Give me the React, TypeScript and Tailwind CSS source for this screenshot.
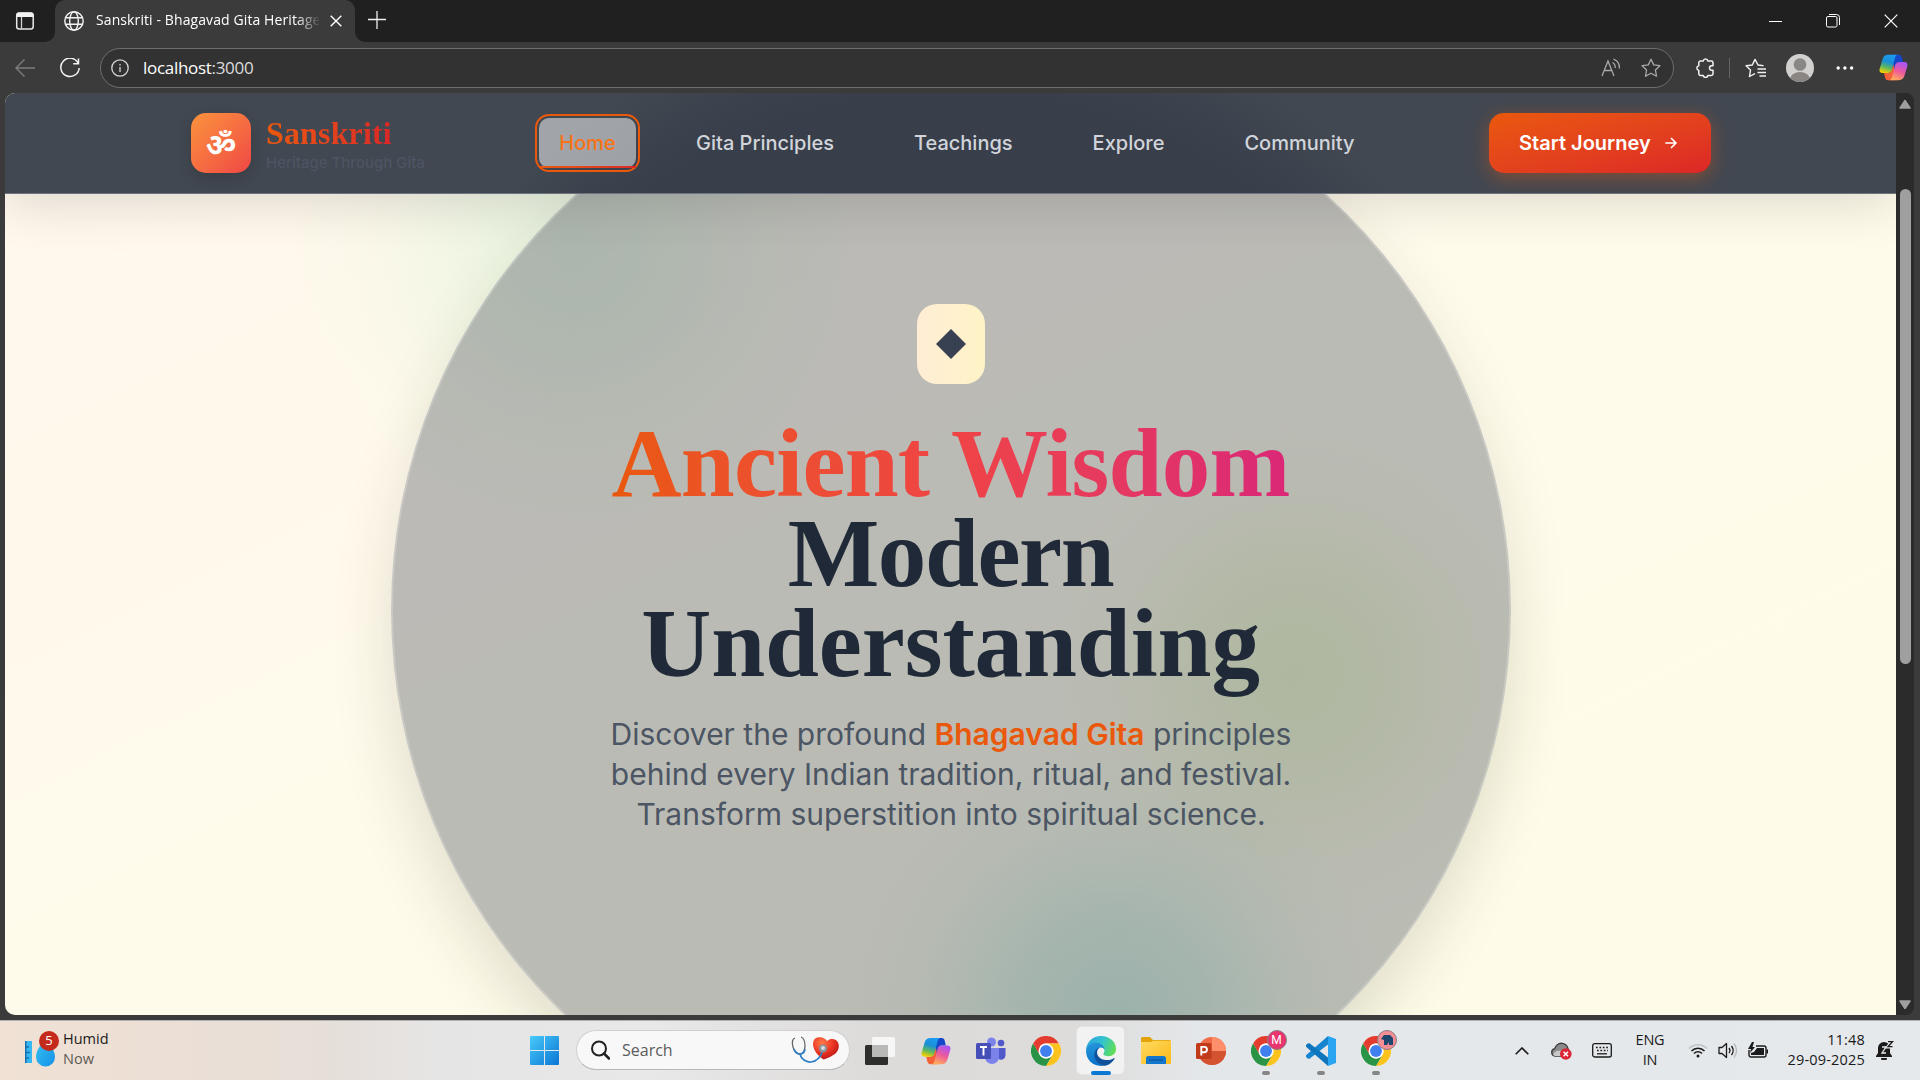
import React from "react";
import type { ReactNode } from "react";

const SEGOE = "font-['Open_Sans','Noto_Sans',sans-serif]";

function CopilotIcon({ size, id }: { size: number; id: string }) {
  return (
    <svg width={size} height={size} viewBox="0 0 32 32">
      <defs>
        <linearGradient id={id + "a"} x1="0.6" y1="0" x2="0.3" y2="1">
          <stop offset="0" stopColor="#1c9bf0" />
          <stop offset="0.4" stopColor="#1b8fd6" />
          <stop offset="0.7" stopColor="#5cb860" />
          <stop offset="1" stopColor="#f5d000" />
        </linearGradient>
        <linearGradient id={id + "b"} x1="0.7" y1="0" x2="0.3" y2="1">
          <stop offset="0" stopColor="#a855f7" />
          <stop offset="0.5" stopColor="#ee5a9b" />
          <stop offset="1" stopColor="#ffae5a" />
        </linearGradient>
      </defs>
      <path d="M14 2h8c2 0 2.800 1 3.300 3l1.200 5h-4c-2.500 0-3.500 1-4.200 3.500L16 20z" fill="#1548c8" />
      <path d="M18 30h-8c-2 0-2.800-1-3.300-3l-1.200-5h4c2.500 0 3.500-1 4.200-3.500L16 12z" fill="#f4623a" />
      <path d="M10 2h11c-2 0-2.900 1.500-3.500 4l-3.200 12c-.7 2.700-2 4-4.800 4H4.500C1 22 0 20 .8 17L4 6.500C5 3.500 7 2 10 2z" fill={`url(#${id}a)`} />
      <path d="M22 30H11c2 0 2.900-1.500 3.500-4l3.200-12c.7-2.700 2-4 4.800-4h5c3.500 0 4.500 2 3.700 5L28 25.500C27 28.500 25 30 22 30z" fill={`url(#${id}b)`} />
    </svg>
  );
}

function ChromeIcon() {
  return (
    <svg width="30" height="30" viewBox="0 0 48 48">
      <circle cx="24" cy="24" r="24" fill="#fff" />
      <path d="M3.200 12A24 24 0 0 1 44.800 12H24a12 12 0 0 0-10.400 6z" fill="#e33b2e" />
      <path d="M44.800 12A24 24 0 0 1 24 48l10.400-18A12 12 0 0 0 34.400 18L24 12z" fill="#fcc31e" />
      <path d="M3.200 12A24 24 0 0 0 24 48l10.400-18a12 12 0 0 1-20.800 0z" fill="#2a9446" />
      <path d="M3.200 12L13.600 30 16 18z" fill="#e33b2e" />
      <path d="M3.200 12L13.600 30l5 4L10 38z" fill="#2a9446" />
      <circle cx="24" cy="24" r="12" fill="#fff" />
      <circle cx="24" cy="24" r="9.500" fill="#3f7fee" />
    </svg>
  );
}

function EdgeIcon() {
  return (
    <svg width="30" height="30" viewBox="0 0 32 32">
      <defs>
        <linearGradient id="edTop" x1="0" y1="0.3" x2="1" y2="0.6">
          <stop offset="0" stopColor="#2aa4dc" />
          <stop offset="0.5" stopColor="#34c3cf" />
          <stop offset="1" stopColor="#62e04e" />
        </linearGradient>
        <linearGradient id="edLeft" x1="0" y1="0" x2="0.3" y2="1">
          <stop offset="0" stopColor="#2a9ade" />
          <stop offset="1" stopColor="#0a72c8" />
        </linearGradient>
      </defs>
      <path d="M0 15C.5 6.500 7.500 0 16 0c9 0 16 6 16 13.500 0 5-3.500 8-8 8-3.500 0-5.500-1.200-5.500-2.300 0-.8 1.200-1.200 1.200-3.700 0-3.500-4-6.500-9-6.500-4 0-8 2-10.700 6z" fill="url(#edTop)" />
      <path d="M0 16c.5-5 5-9 10.500-9 5 0 9 3.500 9.200 7.500-1-1.500-3-2.500-5-2-3.500 1-5.500 5-4.500 9.500.8 4.500 4 8 8.500 9.700-10 1.500-18.700-5.700-18.700-15.700z" fill="url(#edLeft)" />
      <path d="M14.500 12.500c-2.800 2-3.500 5-2 8 1.800 3.700 6.500 5.500 11 5.200 2.500-.2 4.500-1 6-2 .8-.4 1.200.2.800.8C27.500 29 23 32 18.500 31.800 13 30 9 25.500 9 20c0-4 2-6.800 5.500-7.500z" fill="#10519c" />
    </svg>
  );
}

function Caption({ children }: { children: ReactNode }) {
  return <div className="flex h-[42px] w-[58px] items-center justify-center">{children}</div>;
}

function TitleBar() {
  return (
    <div className="flex h-[42px] bg-[#202020]">
      <div className="flex w-[55px] items-center justify-center bg-[#3b3b3b]">
        <div className="flex h-full w-full items-center rounded-br-[10px] bg-[#202020] pl-[15px]">
          <svg width="20" height="20" viewBox="0 0 20 20" fill="none">
            <rect x="1.700" y="2" width="16.500" height="16" rx="2.500" stroke="#e8e8e8" strokeWidth="1.500" />
            <path d="M1.500 6V4a2.500 2.500 0 0 1 2.500-2.500h12A2.500 2.500 0 0 1 18.500 4v2z" fill="#f2f2f2" />
            <path d="M6.500 6v12" stroke="#d0d0d0" strokeWidth="1.300" />
          </svg>
        </div>
      </div>
      <div className="flex w-[300px] items-center rounded-t-[10px] bg-[#3b3b3b] pl-[9px]">
        <svg width="20" height="20" viewBox="0 0 20 20" fill="none" stroke="#f4f4f4" strokeWidth="1.400">
          <circle cx="10" cy="10" r="9.200" />
          <ellipse cx="10" cy="10" rx="4.300" ry="9.200" />
          <path d="M1.600 6.700h16.800M1.600 13.300h16.800" />
        </svg>
        <div className={`${SEGOE} mb-[3px] ml-3 w-[223px] overflow-hidden whitespace-nowrap text-[14px] tracking-[0.1px] text-white [mask-image:linear-gradient(90deg,#000_200px,transparent_225px)]`}>
          Sanskriti - Bhagavad Gita Heritage
        </div>
        <svg className="ml-[11px]" width="12" height="12" viewBox="0 0 12 12" stroke="#fff" strokeWidth="1.400">
          <path d="M.7.700l10.600 10.600M11.300.700L.7 11.300" />
        </svg>
      </div>
      <div className="w-[10px] bg-[#3b3b3b]">
        <div className="h-full rounded-bl-[10px] bg-[#202020]" />
      </div>
      <svg className="mt-[11px] ml-[3px]" width="18" height="18" viewBox="0 0 18 18" stroke="#f0f0f0" strokeWidth="1.300">
        <path d="M9 0v18M0 8.500h18" />
      </svg>
      <div className="ml-auto flex">
        <Caption>
          <div className="h-px w-[13px] bg-white" />
        </Caption>
        <Caption>
          <svg width="14" height="14" viewBox="0 0 14 14" fill="none" stroke="#fff">
            <rect x="0.500" y="2.500" width="10.500" height="10.500" rx="1.500" />
            <path d="M3 .5h7.500a3 3 0 0 1 3 3V11" />
          </svg>
        </Caption>
        <Caption>
          <svg width="14" height="14" viewBox="0 0 14 14" stroke="#fff" strokeWidth="1.200">
            <path d="M.7.700l12.600 12.600M13.300.700L.7 13.300" />
          </svg>
        </Caption>
      </div>
    </div>
  );
}

const STAR = "M10 1.200l2.700 5.700 6.200.8-4.500 4.300 1.100 6.200L10 15.200l-5.500 3 1.100-6.200L1.100 7.700l6.200-.8z";

function Toolbar() {
  return (
    <div className="flex h-[51px] items-center bg-[#3b3b3b]">
      <svg className="ml-[15px]" width="20" height="18" viewBox="0 0 20 18" fill="none" stroke="#7c7c7c" strokeWidth="1.400">
        <path d="M20 9H1M9.500.500L1 9l8.500 8.500" />
      </svg>
      <svg className="ml-[25px]" width="20" height="20" viewBox="0 0 20 20" fill="none" stroke="#f2f2f2" strokeWidth="1.500">
        <path d="M18.300 5.300A9.200 9.200 0 1 0 19.200 10M18.500.500v5.300h-5.300" />
      </svg>
      <div className="ml-5 flex h-10 w-[1574px] items-center rounded-full border border-[#6d6d6d] bg-[#323232] pl-[10px]">
        <svg width="18" height="18" viewBox="0 0 18 18" fill="none" stroke="#d6d6d6" strokeWidth="1.300">
          <circle cx="9" cy="9" r="8.200" />
          <path d="M9 8v5M9 5v1.500" />
        </svg>
        <span className={`${SEGOE} ml-[14px] text-[17px] tracking-[-0.3px] text-white`}>
          localhost<span className="text-[#dcdcdc]">:3000</span>
        </span>
        <svg className="mr-5 ml-auto" width="20" height="20" viewBox="0 0 20 20" fill="none" stroke="#a9a9a9" strokeWidth="1.300">
          <path d="M1 18L7 3l6 15M3.300 12.500h7.500M11.500 4.500c1.700.8 2.800 2.800 2.800 5.500M12.500 1.200c3.800 1.200 6 4.500 6 9.300" />
        </svg>
        <svg className="mr-3" width="20" height="20" viewBox="0 0 20 20" fill="none" stroke="#a9a9a9" strokeWidth="1.300" strokeLinejoin="round">
          <path d={STAR} />
        </svg>
      </div>
      <svg className="ml-[21px]" width="20" height="20" viewBox="0 0 20 20" fill="none" stroke="#f2f2f2" strokeWidth="1.500" strokeLinejoin="round">
        <path d="M5.500 3h2.700a2.400 2.400 0 0 1 4.700 0h3.400A1.700 1.700 0 0 1 18 4.700v3h-1.200a2.300 2.300 0 0 0 0 4.600H18v3.500a1.700 1.700 0 0 1-1.700 1.700h-3.400a2.400 2.400 0 0 1-4.700 0H5.500a1.700 1.700 0 0 1-1.700-1.700v-3.400a2.400 2.400 0 0 1 0-4.700V4.700A1.700 1.700 0 0 1 5.500 3z" />
      </svg>
      <div className="ml-[14px] h-5 w-px bg-[#646464]" />
      <svg className="ml-[15px]" width="21" height="20" viewBox="0 0 21 20" fill="none" stroke="#f2f2f2" strokeWidth="1.400" strokeLinejoin="round">
        <path d="M18.500 7.200l-5.500-.7L10 .9 7.300 6.500l-6.200.8L5.500 11.600 4.500 18l5.500-2.800M12.500 10.500H21M12.500 14H21M14.500 17.500H21" transform="translate(0 .5)" />
      </svg>
      <svg className="ml-5" width="28" height="28" viewBox="0 0 28 28">
        <clipPath id="avatarClip">
          <circle cx="14" cy="14" r="14" />
        </clipPath>
        <g clipPath="url(#avatarClip)">
          <rect width="28" height="28" fill="#d2d0ce" />
          <circle cx="14" cy="10.500" r="6.300" fill="#8a8683" />
          <ellipse cx="14" cy="25.500" rx="10" ry="7.500" fill="#8a8683" />
        </g>
      </svg>
      <svg className="ml-[22px]" width="18" height="4" viewBox="0 0 18 4" fill="#fff">
        <circle cx="2.200" cy="2" r="1.700" />
        <circle cx="8.900" cy="2" r="1.700" />
        <circle cx="15.600" cy="2" r="1.700" />
      </svg>
      <div className="ml-[25px]">
        <CopilotIcon size={29} id="cpTop" />
      </div>
    </div>
  );
}

function NavLink({ children }: { children: ReactNode }) {
  return <a className="flex h-[50px] items-center px-5 text-[20px] font-medium whitespace-nowrap text-[#d1d5db]">{children}</a>;
}

function SiteNav() {
  return (
    <header className="relative z-10 flex h-[101px] shrink-0 items-start border-b border-[#6d7480] bg-[radial-gradient(circle_610px_at_946px_517px,#383e4a_0,#383e4a_84%,#424851_100%)] pt-5 pl-[186px] font-['Inter',sans-serif] shadow-[0_12px_50px_rgba(0,0,0,0.12)]">
      <div className="flex size-[60px] items-center justify-center rounded-[15px] bg-linear-to-br from-[#fb923c] to-[#ef4444] pt-[9px] font-['Noto_Sans_Devanagari','Noto_Sans',sans-serif] text-[30px] leading-none font-bold text-white shadow-[0_5px_16px_rgba(0,0,0,0.16)]">
        <span>ॐ</span>
      </div>
      <div className="ml-[15px] w-[270px]">
        <div className="w-fit bg-linear-to-r from-[#ea580c] to-[#dc2626] bg-clip-text font-['Liberation_Serif',serif] text-[32px] leading-[40px] font-bold tracking-[0.15px] text-transparent">
          Sanskriti
        </div>
        <div className="text-[15px] leading-5 font-medium whitespace-nowrap text-[#4b5563]">Heritage Through Gita</div>
      </div>
      <nav className="mt-[5px] flex gap-10">
        <div className="relative ml-[3px] flex h-[50px] w-[97px] items-center justify-center rounded-[10px] bg-white/50 outline-[2px] outline-offset-[2px] outline-[#ea580c]">
          <span className="text-[20px] font-medium text-[#f97316]">Home</span>
          <span className="absolute bottom-0 left-0 h-[2px] w-full bg-linear-to-r from-[#ea580c] to-[#dc2626]" />
        </div>
        <NavLink>Gita Principles</NavLink>
        <NavLink>Teachings</NavLink>
        <NavLink>Explore</NavLink>
        <NavLink>Community</NavLink>
      </nav>
      <button className="mr-[185px] ml-auto flex h-[60px] w-[222px] items-center rounded-[15px] bg-linear-to-br from-[#ea580c] to-[#dc2626] pl-[30px] text-[20px] font-semibold whitespace-nowrap text-white shadow-[0_5px_19px_rgba(234,88,12,0.4)]">
        Start Journey
        <svg className="ml-[14px]" width="12" height="12" viewBox="0 0 12 12" fill="none" stroke="#fff" strokeWidth="1.700" strokeLinecap="round" strokeLinejoin="round">
          <path d="M1 6h10M6.500 1.500L11 6l-4.500 4.500" />
        </svg>
      </button>
    </header>
  );
}

function Hero() {
  return (
    <>
      <div className="absolute top-[-128px] left-[288px] size-[560px] bg-[radial-gradient(closest-side,rgba(90,210,150,0.13),rgba(90,215,140,0.1)_30%,rgba(100,220,140,0.03)_70%,transparent)]" />
      <div className="absolute top-[320px] left-[1030px] size-[520px] bg-[radial-gradient(closest-side,rgba(130,210,20,0.14),rgba(140,215,30,0.1)_35%,rgba(170,220,50,0.03)_72%,transparent)]" />
      <div className="absolute top-[652px] left-[840px] size-[540px] bg-[radial-gradient(closest-side,rgba(50,190,180,0.22),rgba(50,190,175,0.15)_35%,rgba(60,200,160,0.04)_72%,transparent)]" />
      <div className="absolute top-[-43px] left-[386px] size-[1120px] rounded-full border-2 border-white/20 bg-[rgba(31,41,55,0.3)] shadow-[0_30px_62px_rgba(40,40,20,0.14)]" />
      <main className="relative flex flex-col items-center pt-[110px] text-center">
        <div className="flex h-[80px] w-[68px] items-center justify-center rounded-[20px] bg-linear-to-r from-[#ffedd5] to-[#fef3c7]">
          <svg width="30" height="30" viewBox="0 0 30 30">
            <path d="M15 0l15 15-15 15L0 15z" fill="#374151" />
          </svg>
        </div>
        <h1 className="mt-[35px] font-['Liberation_Serif',serif] text-[97px] leading-[90px] font-bold text-[#1f2937]">
          <span className="block bg-linear-to-r from-[#ea580c] via-[#ef4444] to-[#db2777] bg-clip-text tracking-[-0.8px] text-transparent">Ancient Wisdom</span>
          <span className="block tracking-[-1.4px]">Modern</span>
          <span className="block tracking-[-0.1px]">Understanding</span>
        </h1>
        <p className="mt-[25px] ml-px font-['Inter',sans-serif] text-[30px] leading-10 whitespace-nowrap text-[#4b5563]">
          Discover the profound <span className="font-semibold text-[#ea580c]">Bhagavad Gita</span> principles
          <br />
          behind every Indian tradition, ritual, and festival.
          <br />
          Transform superstition into spiritual science.
        </p>
      </main>
    </>
  );
}

function Scrollbar() {
  return (
    <div className="flex w-[18px] flex-col items-center rounded-r-[8px] bg-[#2b2b2b]">
      <svg className="mt-[6px]" width="12" height="10" viewBox="0 0 12 10">
        <path d="M6 1.500L11 9H1z" fill="#9f9f9f" stroke="#9f9f9f" strokeWidth="1.500" strokeLinejoin="round" />
      </svg>
      <div className="mt-[80px] h-[475px] w-[11px] rounded-full bg-[#9f9f9f]" />
      <svg className="mt-auto mb-[5px]" width="12" height="10" viewBox="0 0 12 10">
        <path d="M6 8.500L11 1H1z" fill="#9f9f9f" stroke="#9f9f9f" strokeWidth="1.500" strokeLinejoin="round" />
      </svg>
    </div>
  );
}

function TaskbarApp({ children, active, dot }: { children: ReactNode; active?: boolean; dot?: boolean }) {
  return (
    <div className="relative flex h-[59px] w-[55px] items-center justify-center">
      {active && <span className="absolute top-[5px] left-[3px] h-[49px] w-[49px] rounded-[6px] border border-[#e3e3e3] bg-[#f2f2f2]" />}
      <span className="relative">{children}</span>
      {active && <span className="absolute bottom-[5px] h-1 w-5 rounded-full bg-[#0b78d4]" />}
      {dot && <span className="absolute bottom-[5px] h-1 w-2 rounded-full bg-[#868686]" />}
    </div>
  );
}

function ChromeProfile({ children, className }: { children?: ReactNode; className: string }) {
  return (
    <div className="relative">
      <ChromeIcon />
      <span className={`absolute -top-[6px] left-[16px] flex size-5 items-center justify-center rounded-full border border-[#8d7c84] font-['Roboto',sans-serif] text-[12px] text-white ${className}`}>
        {children}
      </span>
    </div>
  );
}

function Taskbar() {
  return (
    <footer className={`${SEGOE} flex h-[60px] items-center border-t border-[#b3b1af] bg-[linear-gradient(90deg,#f0e1d4_0,#ecdfd5_150px,#e6dfd9_330px,#e6e5e5_440px,#e8e8e8_650px,#dddbda_880px,#dddcdb_1080px,#e4e7ea_1200px,#e5e9ec_100%)] text-[14.500px] text-[#1b1b1b]`}>
      <div className="relative -mt-[2px] ml-[25px] h-[38px] w-[34px]">
        <svg width="34" height="38" viewBox="0 0 34 38">
          <defs>
            <linearGradient id="drop" x1="0" y1="0" x2="1" y2="1">
              <stop offset="0" stopColor="#35c3f5" />
              <stop offset="1" stopColor="#1791e6" />
            </linearGradient>
          </defs>
          <rect y="10" width="7" height="22" fill="#35b8f1" />
          <path d="M.8 10v22M0 16h4M0 21.500h5M0 27h4" stroke="#176fae" strokeWidth="1.500" />
          <path d="M20.500 7c4 6 9.500 12 9.500 19a9.500 9.500 0 0 1-19 0c0-7 5.500-13 9.500-19z" fill="url(#drop)" />
        </svg>
        <span className="absolute top-0 left-[14px] flex size-5 items-center justify-center rounded-full bg-[#c42b1c] text-[13px] text-white">5</span>
      </div>
      <div className="-mt-[3px] ml-1 w-[467px] text-[14.500px] leading-5">
        <div>Humid</div>
        <div className="text-[#5f5a56]">Now</div>
      </div>
      <svg width="29" height="29" viewBox="0 0 29 29">
        <defs>
          <linearGradient id="win" x1="0" y1="0" x2="1" y2="1" gradientUnits="objectBoundingBox">
            <stop offset="0" stopColor="#48cbfb" />
            <stop offset="1" stopColor="#0a75d3" />
          </linearGradient>
        </defs>
        <path d="M1 0h13v14H0V1a1 1 0 0 1 1-1zM15 0h13a1 1 0 0 1 1 1v13H15zM0 15h14v14H1a1 1 0 0 1-1-1zM15 15h14v13a1 1 0 0 1-1 1H15z" fill="url(#win)" />
      </svg>
      <div className="-mt-px ml-[17px] flex h-10 w-[274px] items-center rounded-full border border-[#d0d0d0] border-b-[#b8b8b8] bg-[#f8f8f8] pl-[14px]">
        <svg width="19" height="20" viewBox="0 0 19 20" fill="none" stroke="#222" strokeWidth="2">
          <circle cx="8" cy="8.500" r="7" />
          <path d="M13 13.500l5 5" strokeWidth="2.500" strokeLinecap="round" />
        </svg>
        <span className="ml-[12px] text-[16px] text-[#5c5c5c]">Search</span>
        <svg className="mr-[8px] ml-auto" width="50" height="28" viewBox="0 0 50 28" fill="none">
          <defs>
            <radialGradient id="heart" cx="0.350" cy="0.250" r="0.900">
              <stop offset="0" stopColor="#ff7a4a" />
              <stop offset="0.500" stopColor="#e93322" />
              <stop offset="1" stopColor="#a80f14" />
            </radialGradient>
          </defs>
          <path d="M36 5c3-3 8-2.500 10 0 3 3.500 2 9-1 12-2.500 2.500-8 5-12.500 6.500C28 21 22 14 22 8.500 22 4 24 1.500 28 1.300 32 1 34.500 3 36 5z" fill="url(#heart)" />
          <path d="M4 2C1 3 1 7 2 11s4 7 7 7 5-4 5-8-1-8-4-9" stroke="#666" strokeWidth="1.300" />
          <path d="M3 13c1 3 3.500 5 6 5 3 0 4.500-2 5-5M9 18c1 5 6 8.500 11 8 7-.5 10-6 12-12" stroke="#2f7fc4" strokeWidth="1.700" />
          <circle cx="32" cy="12.500" r="4" fill="#8b9298" />
          <circle cx="32" cy="12" r="2" fill="#d8dde0" />
        </svg>
      </div>
      <div className="ml-[3px] flex">
        <TaskbarApp>
          <svg className="-ml-[2px]" width="30" height="28" viewBox="0 0 30 28">
            <rect y="8" width="23" height="20" rx="1.500" fill="#2e2e2c" />
            <rect x="7" width="23" height="20" rx="1.500" fill="#fafafa" fillOpacity="0.850" />
            <rect x="7" y="8" width="16" height="12" fill="#b9b9b8" />
          </svg>
        </TaskbarApp>
        <TaskbarApp>
          <CopilotIcon size={30} id="cpBar" />
        </TaskbarApp>
        <TaskbarApp>
          <svg width="30" height="28" viewBox="0 0 30 28">
            <circle cx="15.500" cy="5" r="4.500" fill="#7b83eb" />
            <circle cx="25" cy="6" r="3.300" fill="#5059c9" />
            <path d="M20 11h9.500v7.500a4.500 4.500 0 0 1-7 3.500z" fill="#5059c9" />
            <path d="M9 11h14v9a7 7 0 0 1-14 0z" fill="#7b83eb" />
            <rect y="6" width="15" height="16" rx="1.500" fill="#464eb8" />
            <path d="M4 10h7M7.500 10v8.500" stroke="#fff" strokeWidth="1.900" />
          </svg>
        </TaskbarApp>
        <TaskbarApp>
          <ChromeIcon />
        </TaskbarApp>
        <TaskbarApp active>
          <EdgeIcon />
        </TaskbarApp>
        <TaskbarApp>
          <svg width="30" height="27" viewBox="0 0 30 27">
            <defs>
              <linearGradient id="folder" x1="0" y1="0" x2="1" y2="1">
                <stop offset="0" stopColor="#ffda62" />
                <stop offset="1" stopColor="#fcb917" />
              </linearGradient>
            </defs>
            <path d="M0 1.500A1.500 1.500 0 0 1 1.500 0H9l3 3h16.500A1.500 1.500 0 0 1 30 4.500V8H0z" fill="#e3a209" />
            <path d="M0 5h10l2-1.300h18V25.500a1.500 1.500 0 0 1-1.500 1.500h-27A1.500 1.500 0 0 1 0 25.500z" fill="url(#folder)" />
            <path d="M5 27v-5.500A2.500 2.500 0 0 1 7.500 19h15a2.500 2.500 0 0 1 2.500 2.500V27z" fill="#1277cc" />
            <path d="M8 23h14" stroke="#0b4f92" />
          </svg>
        </TaskbarApp>
        <TaskbarApp>
          <svg width="30" height="28" viewBox="0 0 30 28">
            <circle cx="16" cy="14" r="14" fill="#ed6c47" />
            <path d="M16 0a14 14 0 0 1 14 14H16z" fill="#ff8f6b" />
            <path d="M2 14h28a14 14 0 0 1-28 0z" fill="#d35230" />
            <rect y="6" width="15.500" height="16" rx="1.500" fill="#c13b1b" />
            <path d="M5.300 18.500V9.900h3a2.600 2.600 0 0 1 0 5.300h-3" stroke="#fff" strokeWidth="1.900" fill="none" />
          </svg>
        </TaskbarApp>
        <TaskbarApp dot>
          <ChromeProfile className="bg-[#e8356f]">M</ChromeProfile>
        </TaskbarApp>
        <TaskbarApp dot>
          <svg width="30" height="30" viewBox="0 0 30 30">
            <path d="M22 0L0 19.300v1.700l2 1.700h1.500L22 8.500z" fill="#1684cf" />
            <path d="M22 30L0 10.700V9l2-1.700h1.500L22 21.500z" fill="#0f76bd" />
            <path d="M22 0l8 3v24l-8 3z" fill="#2aa5f2" />
          </svg>
        </TaskbarApp>
        <TaskbarApp dot>
          <ChromeProfile className="bg-[#f48d94]">
            <svg width="14" height="12" viewBox="0 0 14 12">
              <path d="M1 5l3-4h6l3 3v7H9V8l-2 3H4V6z" fill="#1d466f" />
            </svg>
          </ChromeProfile>
        </TaskbarApp>
      </div>
      <div className="ml-auto flex items-center">
        <svg width="14" height="8" viewBox="0 0 14 8" fill="none" stroke="#1b1b1b" strokeWidth="1.600">
          <path d="M.7 7.300L7 1l6.300 6.300" />
        </svg>
        <svg className="ml-[22px]" width="21" height="18" viewBox="0 0 21 18">
          <path d="M4 14a3.700 3.700 0 0 1-.3-7.300C4.500 3.500 7.500 1 11 1.300c3 .2 5 2 5.700 4.500L18 9l-8 5z" fill="#8b8b8b" stroke="#3a3a3a" strokeWidth="1.300" />
          <path d="M2 13c1-3 4-5 8-4v5H4z" fill="#c9c9c9" />
          <circle cx="14.800" cy="12" r="5.800" fill="#dc2434" />
          <path d="M12.600 9.800l4.400 4.400M17 9.800l-4.400 4.400" stroke="#fff" strokeWidth="1.500" />
        </svg>
        <svg className="ml-5" width="20" height="15" viewBox="0 0 20 15" fill="none" stroke="#1b1b1b" strokeWidth="1.300">
          <rect x="0.700" y="0.700" width="18.600" height="13.300" rx="2" />
          <path d="M4 4.500h12M5 7.500h11" strokeDasharray="1.700 1.700" strokeWidth="1.700" />
          <path d="M5 10.800h10" />
        </svg>
        <div className="-mt-[2px] ml-[18px] w-[40px] text-center leading-5 tracking-[-0.2px]">
          ENG
          <br />
          IN
        </div>
        <svg className="ml-[18px]" width="20" height="15" viewBox="0 0 20 15" fill="none" stroke="#1b1b1b" strokeWidth="1.500">
          <path d="M1 5.500a12.500 12.500 0 0 1 18 0" stroke="#c0c2c4" />
          <path d="M3.500 8a9 9 0 0 1 13 0M6 10.500a5.600 5.600 0 0 1 8 0" />
          <circle cx="10" cy="13" r="1.500" fill="#1b1b1b" stroke="none" />
        </svg>
        <svg className="ml-[10px]" width="20" height="17" viewBox="0 0 20 17" fill="none" stroke="#1b1b1b" strokeWidth="1.300">
          <path d="M1 5.500h3L8.500 1.500v14L4 11.500H1z" strokeLinejoin="round" />
          <path d="M11 6a4 4 0 0 1 0 5M13.500 4a7.500 7.500 0 0 1 0 9" />
          <path d="M16 1.500a11 11 0 0 1 0 14" stroke="#b5b8ba" />
        </svg>
        <svg className="ml-[10px]" width="20" height="17" viewBox="0 0 20 17">
          <path d="M8 4h8a2 2 0 0 1 2 2v7a2 2 0 0 1-2 2H3a2 2 0 0 1-2-2V8" fill="none" stroke="#1b1b1b" strokeWidth="1.400" />
          <path d="M9 6h7v7H3v-2l3-1z" fill="#1b1b1b" />
          <path d="M18.500 7.500h1.500v4h-1.500zM4 0L0 7h3l-1 4 5-6H4.500L6 0z" fill="#1b1b1b" />
        </svg>
        <div className="-mt-[2px] ml-[15px] w-[82px] text-right leading-5 tracking-[0.18px] whitespace-nowrap">
          11:48
          <br />
          29-09-2025
        </div>
        <svg className="mr-[26px] ml-[11px]" width="18" height="19" viewBox="0 0 18 19">
          <path d="M8 1a6 6 0 0 0-6 6v5l-2 3v1h16v-1l-2-3V7a6 6 0 0 0-6-6zM5 17h6a3 3 0 0 1-6 0z" fill="#1b1b1b" />
          <path d="M6 6h4l-4 6h4" stroke="#e5e9ec" strokeWidth="1.300" fill="none" />
          <path d="M12 .7h4.500l-4.500 5h4.500" stroke="#e5e9ec" strokeWidth="3.500" fill="none" />
          <path d="M12 .7h4.500l-4.500 5h4.500" stroke="#1b1b1b" strokeWidth="1.300" fill="none" />
        </svg>
      </div>
    </footer>
  );
}

export default function App() {
  return (
    <div className="flex h-[1080px] w-[1920px] flex-col overflow-hidden bg-[#3b3b3b]">
      <TitleBar />
      <Toolbar />
      <div className="flex h-[922px] pr-[6px] pl-[5px]">
        <div className="relative h-full w-[1891px] overflow-hidden rounded-l-[10px] bg-linear-to-br from-[#fff7ed] via-[#fffbeb] to-[#fefce8]">
          <SiteNav />
          <Hero />
        </div>
        <Scrollbar />
      </div>
      <div className="h-[5px]" />
      <Taskbar />
    </div>
  );
}
